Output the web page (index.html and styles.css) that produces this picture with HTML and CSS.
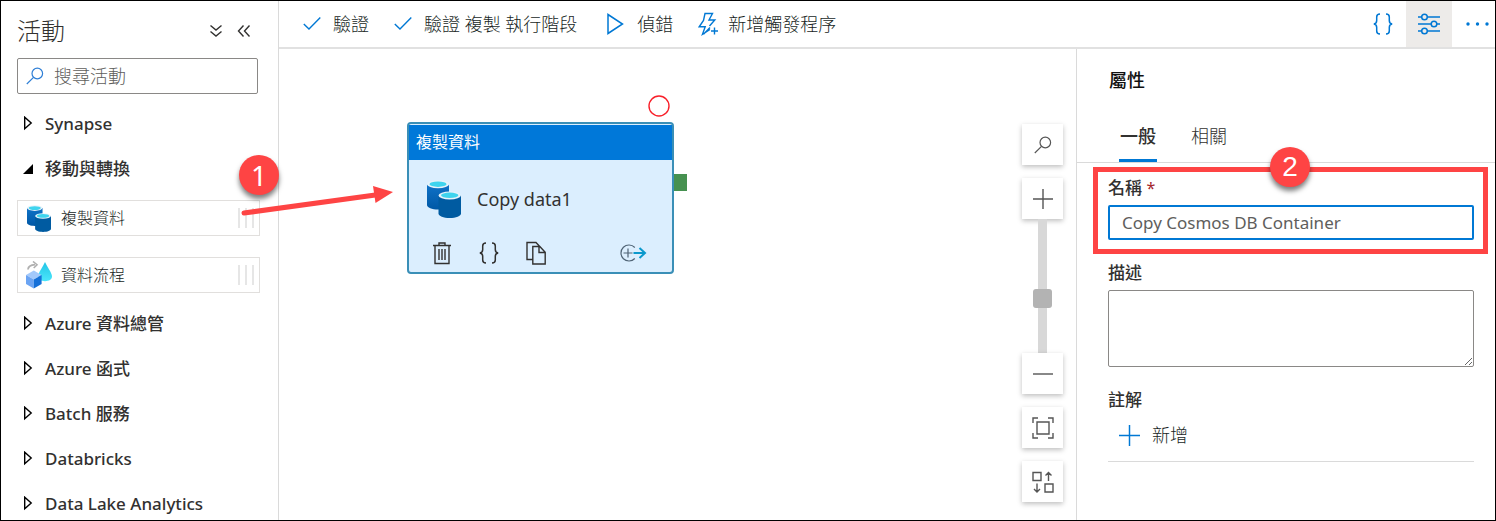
FILE: index.html
```html
<!DOCTYPE html>
<html lang="zh-Hant">
<head>
<meta charset="utf-8">
<title>活動</title>
<link rel="stylesheet" href="styles.css">
</head>
<body>
<svg class="defs" width="0" height="0" aria-hidden="true">
  <defs>
    <linearGradient id="g-cyl" x1="0" x2="0" y1="0" y2="1"><stop offset="0" stop-color="#0f72c8"/><stop offset="1" stop-color="#0058a5"/></linearGradient>
    <linearGradient id="g-drop" x1="0" x2="0" y1="0" y2="1"><stop offset="0" stop-color="#22c4e6"/><stop offset="1" stop-color="#4be6fb"/></linearGradient>
    <symbol id="i-copydata" viewBox="0 0 34 38">
      <path d="M0 4v21c0 2.600 5 4.500 11 4.500s11-1.900 11-4.500V4z" fill="url(#g-cyl)"/>
      <ellipse cx="11" cy="4.200" rx="11" ry="4" fill="#e6f2fa"/>
      <ellipse cx="11" cy="4.200" rx="8.500" ry="2.700" fill="#3fd4ee"/>
      <path d="M11.500 15.500v18c0 2.500 5 4.500 11.200 4.500S34 36 34 33.500v-18z" fill="#005ba1"/>
      <ellipse cx="22.700" cy="15.500" rx="11.200" ry="4" fill="#e6f2fa"/>
      <ellipse cx="22.700" cy="15.300" rx="8.700" ry="2.700" fill="#3fd4ee"/>
    </symbol>
    <symbol id="i-search" viewBox="0 0 18 18"><circle cx="11.300" cy="6.500" r="5.300" fill="none" stroke="currentColor" stroke-width="1.200"/><path d="M7.500 10.300L.8 17" stroke="currentColor" stroke-width="1.200"/></symbol>
    <symbol id="i-check" viewBox="0 0 18 18"><path d="M.8 9l5.200 5L17.300 2.500" fill="none" stroke="currentColor" stroke-width="1.400"/></symbol>
    <symbol id="i-braces" viewBox="0 0 20 22"><path d="M7 1C4.500 1 3.700 2 3.700 4v3.500C3.700 9.500 3 10.800.8 11c2.200.2 2.900 1.500 2.900 3.500V18c0 2 .8 3 3.300 3M13 1c2.500 0 3.300 1 3.300 3v3.500c0 2 .7 3.300 2.900 3.500-2.200.2-2.900 1.500-2.900 3.500V18c0 2-.8 3-3.300 3" fill="none" stroke="currentColor" stroke-width="1.500"/></symbol>
    <symbol id="i-plus" viewBox="0 0 20 20"><path d="M10 0v20M0 10h20" stroke="currentColor" stroke-width="1.400"/></symbol>
    <symbol id="i-closed" viewBox="0 0 10 16"><path d="M1.700 1.200v11.600L8.200 7z" fill="none" stroke="currentColor" stroke-width="1.400"/></symbol>
  </defs>
</svg>
<div class="app">
  <aside class="sidebar">
    <header class="side-head">
      <h1>活動</h1>
      <button class="icon-btn" aria-label="全部展開"><svg width="14" height="14" viewBox="0 0 14 14"><path d="M1.500 1.500L7 6l5.500-4.500M1.500 7.500L7 12l5.500-4.500" fill="none" stroke="currentColor" stroke-width="1.400"/></svg></button>
      <button class="icon-btn" aria-label="摺疊"><svg width="14" height="14" viewBox="0 0 14 14"><path d="M6.500 1.500L1.500 7l5 5.500M12.500 1.500L7.500 7l5 5.500" fill="none" stroke="currentColor" stroke-width="1.400"/></svg></button>
    </header>
    <label class="search">
      <svg width="18" height="18"><use href="#i-search"/></svg>
      <input type="text" placeholder="搜尋活動" aria-label="搜尋活動">
    </label>
    <nav class="groups">
      <button class="group"><svg width="10" height="16"><use href="#i-closed"/></svg><span>Synapse</span></button>
      <button class="group"><svg width="10" height="16" viewBox="0 0 10 16" overflow="visible"><path d="M10 3v10H0z" fill="#000"/></svg><span>移動與轉換</span></button>
      <ul class="items">
        <li>
          <svg width="24" height="27"><use href="#i-copydata"/></svg>
          <span>複製資料</span><i class="grip"></i>
        </li>
        <li>
          <svg width="28" height="28" viewBox="0 0 28 28">
            <path d="M20 1c2 4.500 7 11 7 14.500 0 2.800-3 4.700-7 4.700s-7-1.900-7-4.700C13 12 18 5.500 20 1z" fill="url(#g-drop)"/>
            <path d="M3 8.500C3.200 5.500 5.500 4 10 3.700" fill="none" stroke="#b0b0b0" stroke-width="1.800"/><path d="M8 .5L12 3.700 8.700 7" fill="none" stroke="#b0b0b0" stroke-width="1.600"/>
            <path d="M1 14l7.800-4.500 7.800 4.500-7.800 4.500z" fill="#a3c9fb"/>
            <path d="M1 14l7.800 4.500v9L1 23z" fill="#6ba4f3"/><path d="M16.600 14l-7.800 4.500v9l7.800-4.500z" fill="#1570d8"/>
          </svg>
          <span>資料流程</span><i class="grip"></i>
        </li>
      </ul>
      <button class="group"><svg width="10" height="16"><use href="#i-closed"/></svg><span>Azure 資料總管</span></button>
      <button class="group"><svg width="10" height="16"><use href="#i-closed"/></svg><span>Azure 函式</span></button>
      <button class="group"><svg width="10" height="16"><use href="#i-closed"/></svg><span>Batch 服務</span></button>
      <button class="group"><svg width="10" height="16"><use href="#i-closed"/></svg><span>Databricks</span></button>
      <button class="group"><svg width="10" height="16"><use href="#i-closed"/></svg><span>Data Lake Analytics</span></button>
    </nav>
  </aside>

  <main class="main">
    <div class="toolbar">
      <button class="tool"><svg width="18" height="18"><use href="#i-check"/></svg>驗證</button>
      <button class="tool"><svg width="18" height="18"><use href="#i-check"/></svg>驗證 複製 執行階段</button>
      <button class="tool tool-run"><svg width="18" height="22" viewBox="0 0 18 22"><path d="M2 1.500v19L16.500 11z" fill="none" stroke="currentColor" stroke-width="1.500"/></svg>偵錯</button>
      <button class="tool tool-trigger"><svg width="20" height="24" viewBox="0 0 20 24"><path d="M12 17.500L4.500 22.300l2.700-7.500H1.200L5.500 8.500 7 1.500h7.500L11 8h5.800L11.500 14M5.500 22.300L12 15.500M16.500 15.500v7M13 19h7" fill="none" stroke="currentColor" stroke-width="1.400"/></svg>新增觸發程序</button>
      <div class="tools-right">
        <button class="sq" aria-label="程式碼"><svg width="20" height="22"><use href="#i-braces"/></svg></button>
        <button class="sq active" aria-label="屬性"><svg width="22" height="22" viewBox="0 0 22 22"><g fill="none" stroke="currentColor" stroke-width="1.500"><path d="M0 4h3.500M9.500 4H22M0 11h13M19 11h3M0 18h3.500M9.500 18H22"/><circle cx="6.500" cy="4" r="2.800"/><circle cx="16" cy="11" r="2.800"/><circle cx="6.500" cy="18" r="2.800"/></g></svg></button>
        <button class="sq more" aria-label="更多"><svg width="23" height="6" viewBox="0 0 23 6"><g fill="currentColor"><circle cx="2" cy="3" r="1.700"/><circle cx="11.500" cy="3" r="1.700"/><circle cx="21" cy="3" r="1.700"/></g></svg></button>
      </div>
    </div>

    <div class="content">
      <section class="canvas">
        <svg class="status" width="22" height="22" viewBox="0 0 22 22"><circle cx="11" cy="11" r="10" fill="#fff" stroke="#f8202a" stroke-width="1.400"/></svg>
        <div class="port"></div>
        <article class="node">
          <header>複製資料</header>
          <div class="node-name"><svg width="34" height="38"><use href="#i-copydata"/></svg><span>Copy data1</span></div>
          <footer>
            <button aria-label="刪除"><svg width="20" height="24" viewBox="0 0 20 24"><path d="M1 4.500h18M7 4V2h6v2M3 5v17.500h14V5M7 8v11M10 8v11M13 8v11" fill="none" stroke="currentColor" stroke-width="1.400"/></svg></button>
            <button aria-label="程式碼"><svg width="20" height="22"><use href="#i-braces"/></svg></button>
            <button aria-label="複製"><svg width="20" height="24" viewBox="0 0 20 24"><path d="M6.500 18.500H1v-17h9l3.500 3.700M6.800 5.500h7l5.400 5.700V23H6.800zM13 5.500v6h6" fill="none" stroke="currentColor" stroke-width="1.400"/></svg></button>
            <button class="add-out" aria-label="新增輸出"><svg width="28" height="20" viewBox="0 0 28 20"><path d="M15.800 4.500a8 8 0 1 0 0 11M4.500 10h9M9 5.500v9" fill="none" stroke="#4f6375" stroke-width="1.200"/><path d="M14.500 10H26M20.500 5l5.500 5-5.500 5" fill="none" stroke="#0a98cc" stroke-width="2"/></svg></button>
          </footer>
        </article>
        <div class="zoom">
          <button class="tile" aria-label="搜尋"><svg width="18" height="18"><use href="#i-search"/></svg></button>
          <div class="zoom-scale">
            <button class="tile" aria-label="放大"><svg width="20" height="20"><use href="#i-plus"/></svg></button>
            <input type="range" min="0" max="100" value="39" aria-label="縮放">
            <button class="tile" aria-label="縮小"><svg width="20" height="20" viewBox="0 0 20 20"><path d="M0 10h20" stroke="currentColor" stroke-width="1.400"/></svg></button>
          </div>
          <button class="tile" aria-label="符合畫面"><svg width="22" height="22" viewBox="0 0 22 22"><path d="M1 6V1h5M16 1h5v5M21 16v5h-5M6 21H1v-5M5 5h12v12H5z" fill="none" stroke="currentColor" stroke-width="1.400"/></svg></button>
          <button class="tile" aria-label="自動對齊"><svg width="22" height="22" viewBox="0 0 22 22"><path d="M1 1.500h8v8H1zM13 13h8v8h-8zM16.500 10V1.500M13.500 4.500l3-3 3 3M5 12.500V21M2 18l3 3 3-3" fill="none" stroke="currentColor" stroke-width="1.400"/></svg></button>
        </div>
      </section>

      <section class="props">
        <h2>屬性</h2>
        <div class="tabs" role="tablist">
          <button class="tab selected" role="tab" aria-selected="true">一般</button>
          <button class="tab" role="tab" aria-selected="false">相關</button>
        </div>
        <form class="form">
          <div class="field field-name">
            <label for="name">名稱 <span class="req">*</span></label>
            <input id="name" type="text" value="Copy Cosmos DB Container">
            <div class="callout"><span class="badge badge-two">2</span></div>
          </div>
          <div class="field">
            <label for="desc">描述</label>
            <textarea id="desc"></textarea>
          </div>
          <div class="field notes">
            <h3>註解</h3>
            <button type="button" class="add"><svg width="21" height="21"><use href="#i-plus"/></svg>新增</button>
          </div>
        </form>
      </section>
    </div>
  </main>

  <div class="pointer">
    <svg width="160" height="34" viewBox="0 0 160 34"><path d="M6 27L141 8.500" stroke="#fe4444" stroke-width="5" stroke-linecap="round"/><path d="M135 0l20 6-17.500 11z" fill="#fe4444"/></svg>
    <span class="badge badge-one">1</span>
  </div>
</div>
</body>
</html>
```

FILE: styles.css
```css
* { box-sizing: border-box; }

body {
  margin: 0;
  font-family: "Noto Sans", "Noto Sans CJK TC", sans-serif;
  font-size: 18px;
  line-height: 24px;
  color: #323130;
  background: #fff;
}

h1, h2, h3, ul { margin: 0; padding: 0; font-weight: 400; }
svg { display: block; flex: none; }

button {
  padding: 0;
  border: 0;
  background: none;
  color: inherit;
  font: inherit;
}

input, textarea { font: inherit; color: inherit; outline: none; }

.defs { position: absolute; }

.app {
  position: relative;
  display: grid;
  grid-template-columns: 278px minmax(0, 1fr);
  height: 100vh;
  border: 1px solid #000;
  overflow: hidden;
}

/* Activities sidebar */
.sidebar {
  padding: 12px 18px 0 16px;
  border-right: 1px solid #dadada;
  overflow: hidden;
}

.side-head {
  display: flex;
  align-items: center;
  gap: 14px;
  height: 36px;
  padding-right: 9px;
}
.side-head h1 {
  flex: 1;
  font-size: 24px;
  font-weight: 300;
  line-height: 36px;
}

.search {
  display: flex;
  align-items: center;
  gap: 10px;
  height: 36px;
  margin: 9px 2px 7px 0;
  padding: 0 8px;
  border: 1px solid #8a8886;
  border-radius: 2px;
  color: #2f7fd6;
}
.search input {
  flex: 1;
  min-width: 0;
  padding: 0;
  border: 0;
  background: none;
  font-weight: 300;
}
.search input::placeholder { color: #605e5c; opacity: 1; }

.group {
  display: flex;
  align-items: center;
  gap: 12px;
  width: 100%;
  height: 45px;
  padding-left: 6px;
  text-align: left;
  font-size: 17px;
  font-weight: 500;
}
.group svg { color: #000; }

.items {
  display: grid;
  gap: 21px;
  padding: 9px 0 8px;
  list-style: none;
}
.items li {
  display: grid;
  grid-template-columns: 28px 1fr auto;
  align-items: center;
  justify-items: start;
  gap: 8px;
  height: 36px;
  padding: 0 5px 0 7px;
  border: 1px solid #e1dfdd;
  font-size: 16px;
  font-weight: 300;
  color: #201f1e;
}
.items li > svg { justify-self: center; }
.grip {
  width: 16px;
  height: 20px;
  background: repeating-linear-gradient(90deg, #e6e6e6 0 2px, transparent 2px 7px);
}

/* Toolbar */
.main {
  display: flex;
  flex-direction: column;
  min-width: 0;
}
.toolbar {
  display: flex;
  align-items: stretch;
  gap: 25px;
  height: 48px;
  padding-left: 24px;
  border-bottom: 2px solid #e1e1e1;
}
.tool {
  display: flex;
  align-items: center;
  gap: 12px;
  font-weight: 300;
  white-space: nowrap;
  color: #201f1e;
}
.tool-run { gap: 13px; padding-left: 4px; }
.tool-trigger { gap: 10px; }
.tool svg, .sq { color: #0078d4; }
.tools-right { display: flex; margin-left: auto; }
.sq {
  display: grid;
  place-items: center;
  width: 46px;
}
.sq.active { background: #edebe9; }
.sq.more {
  justify-content: end;
  width: 43px;
  padding-right: 6px;
}

/* Canvas */
.content {
  flex: 1;
  display: grid;
  grid-template-columns: minmax(0, 1fr) 419px;
  min-height: 0;
}
.canvas {
  position: relative;
  display: flex;
  justify-content: flex-end;
  padding: 75px 13px 0 0;
}
.node {
  position: absolute;
  left: 128px;
  top: 73px;
  width: 267px;
  padding: 1px 0 0;
  border: 2px solid #3a8fb7;
  border-radius: 4px;
  background: #dbeefe;
}
.node header {
  height: 35px;
  padding-left: 7px;
  background: #0078d9;
  color: #fff;
  font-size: 16px;
  line-height: 34px;
}
.node-name {
  display: flex;
  align-items: center;
  gap: 16px;
  height: 78px;
  padding-left: 18px;
}
.node footer {
  display: flex;
  align-items: center;
  gap: 27px;
  height: 34px;
  padding: 0 25px 4px 23px;
}
.add-out { margin-left: auto; }
.port {
  position: absolute;
  left: 394px;
  top: 125px;
  width: 14px;
  height: 17px;
  background: #469150;
}
.status {
  position: absolute;
  left: 369px;
  top: 46px;
}

.zoom, .zoom-scale {
  display: flex;
  flex-direction: column;
  align-items: center;
}
.zoom { gap: 13px; }
.tile {
  display: grid;
  place-items: center;
  width: 41px;
  height: 41px;
  background: #fff;
  color: #555;
  box-shadow: 0 2px 5px rgba(0, 0, 0, .25);
}
/* The bar is narrower than the thumb, so it is painted as a centred stripe */
.zoom input {
  appearance: none;
  writing-mode: vertical-lr;
  direction: rtl;
  width: 19px;
  height: 134px;
  margin: 0;
  background: linear-gradient(#d8d8d8, #d8d8d8) center / 9px 100% no-repeat;
}
.zoom input::-webkit-slider-thumb {
  appearance: none;
  width: 19px;
  height: 19px;
  border-radius: 3px;
  background: #b3b3b3;
}

/* Properties */
.props {
  border-left: 1px solid #dadada;
}
.props h2 {
  padding: 19px 32px 0;
  font-size: 18px;
  font-weight: 500;
  color: #111;
}
.tabs {
  display: flex;
  gap: 33px;
  margin-top: 20px;
  padding-left: 42px;
  border-bottom: 1px solid #dadada;
}
.tab {
  height: 50px;
  padding: 0 1px;
  border-bottom: 3px solid transparent;
  font-weight: 300;
}
.tab.selected {
  border-color: #0078d4;
  font-weight: 500;
}
.form {
  display: grid;
  gap: 21px;
  padding: 13px 21px 0 31px;
}
.field { display: grid; gap: 5px; }
.field-name { position: relative; }
.field label, .field h3 {
  font-size: 17px;
  font-weight: 500;
}
.req { color: #a4262c; font-size: 16px; font-weight: 400; }
.field input {
  width: 100%;
  height: 35px;
  padding: 0 12px;
  border: 2px solid #0078d4;
  border-radius: 2px;
  font-size: 17px;
  color: #605e5c;
}
.field textarea {
  width: 100%;
  height: 77px;
  border: 1px solid #8a8886;
  border-radius: 2px;
}
.notes {
  padding-bottom: 14px;
  border-bottom: 1px solid #dadada;
}
.add {
  display: flex;
  align-items: center;
  gap: 12px;
  padding: 6px 11px 0;
  font-weight: 300;
  color: #201f1e;
}
.add svg { color: #0078d4; }

/* Step callouts */
.callout {
  position: absolute;
  inset: -9px -14px -14px -15px;
  border: 5px solid #fe4444;
  pointer-events: none;
}
.pointer {
  position: absolute;
  left: 237px;
  top: 185px;
  pointer-events: none;
}
.badge {
  position: absolute;
  width: 40px;
  height: 40px;
  border-radius: 50%;
  background: #fe4444;
  box-shadow: 0 4px 5px rgba(0, 0, 0, .5);
  color: #fff;
  font-size: 28px;
  line-height: 40px;
  text-align: center;
}
.badge-one { left: 1px; top: -31px; }
.badge-two {
  left: 172px;
  top: -25px;
  font-family: "Liberation Sans", sans-serif;
}
```
